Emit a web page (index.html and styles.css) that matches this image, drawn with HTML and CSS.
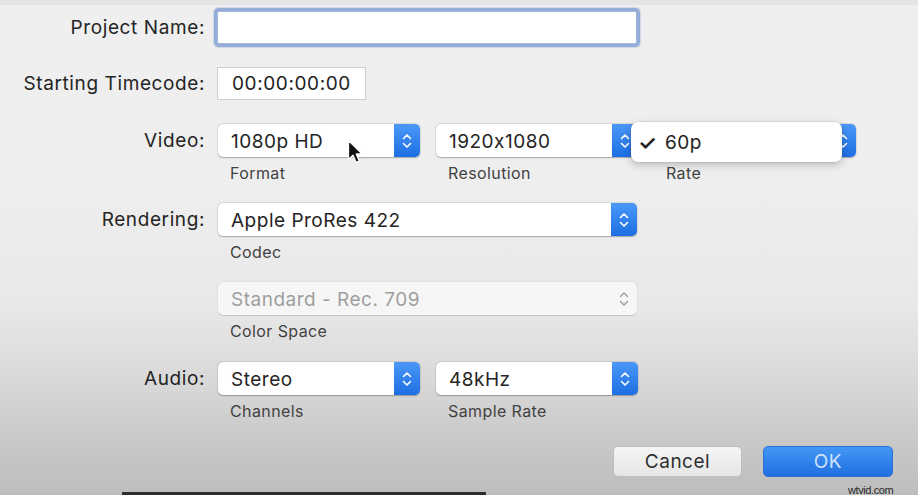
FILE: index.html
```html
<!DOCTYPE html>
<html>
<head>
<meta charset="utf-8">
<link rel="stylesheet" href="styles.css">
</head>
<body>
<div class="page">
  <div class="topline"></div>
  <div class="form">
    <div class="label">Project Name:</div>
    <div class="ctrl"><div class="textfield focused"></div></div>

    <div class="label">Starting Timecode:</div>
    <div class="ctrl"><div class="textfield timecode">00:00:00:00</div></div>

    <div class="label">Video:</div>
    <div class="ctrl triple">
      <div class="cell">
        <div class="popup"><span class="val">1080p HD</span><span class="stepper"><svg width="10" height="16" viewBox="0 0 10 16"><path d="M1.5 5.5 L5 2 L8.5 5.5 M1.5 10.5 L5 14 L8.5 10.5" fill="none" stroke="#fff" stroke-width="1.6" stroke-linecap="round" stroke-linejoin="round"/></svg></span></div>
        <div class="sub">Format</div>
      </div>
      <div class="cell">
        <div class="popup"><span class="val">1920x1080</span><span class="stepper"><svg width="10" height="16" viewBox="0 0 10 16"><path d="M1.5 5.5 L5 2 L8.5 5.5 M1.5 10.5 L5 14 L8.5 10.5" fill="none" stroke="#fff" stroke-width="1.6" stroke-linecap="round" stroke-linejoin="round"/></svg></span></div>
        <div class="sub">Resolution</div>
      </div>
      <div class="cell rate">
        <div class="popup"><span class="val"></span><span class="stepper"><svg width="10" height="16" viewBox="0 0 10 16"><path d="M1.5 5.5 L5 2 L8.5 5.5 M1.5 10.5 L5 14 L8.5 10.5" fill="none" stroke="#fff" stroke-width="1.6" stroke-linecap="round" stroke-linejoin="round"/></svg></span></div>
        <div class="sub">Rate</div>
        <div class="menu"><span class="check">✓</span><span class="item">60p</span></div>
      </div>
      <svg class="cursor" width="17" height="26" viewBox="0 0 17 26"><path d="M1.5 1.5 L1.5 20.5 L6 16.2 L9.2 23.4 L12.3 22 L9.2 15 L15.2 15 Z" fill="#111" stroke="#fff" stroke-width="1.3" stroke-linejoin="round"/></svg>
    </div>

    <div class="label">Rendering:</div>
    <div class="ctrl">
      <div class="popup wide"><span class="val">Apple ProRes 422</span><span class="stepper"><svg width="10" height="16" viewBox="0 0 10 16"><path d="M1.5 5.5 L5 2 L8.5 5.5 M1.5 10.5 L5 14 L8.5 10.5" fill="none" stroke="#fff" stroke-width="1.6" stroke-linecap="round" stroke-linejoin="round"/></svg></span></div>
      <div class="sub">Codec</div>
    </div>

    <div class="label"></div>
    <div class="ctrl">
      <div class="popup wide disabled"><span class="val">Standard - Rec. 709</span><span class="stepper"><svg width="10" height="16" viewBox="0 0 10 16"><path d="M1.5 5.5 L5 2 L8.5 5.5 M1.5 10.5 L5 14 L8.5 10.5" fill="none" stroke="#9a9a9a" stroke-width="1.4" stroke-linecap="round" stroke-linejoin="round"/></svg></span></div>
      <div class="sub">Color Space</div>
    </div>

    <div class="label">Audio:</div>
    <div class="ctrl triple">
      <div class="cell">
        <div class="popup"><span class="val">Stereo</span><span class="stepper"><svg width="10" height="16" viewBox="0 0 10 16"><path d="M1.5 5.5 L5 2 L8.5 5.5 M1.5 10.5 L5 14 L8.5 10.5" fill="none" stroke="#fff" stroke-width="1.6" stroke-linecap="round" stroke-linejoin="round"/></svg></span></div>
        <div class="sub">Channels</div>
      </div>
      <div class="cell">
        <div class="popup"><span class="val">48kHz</span><span class="stepper"><svg width="10" height="16" viewBox="0 0 10 16"><path d="M1.5 5.5 L5 2 L8.5 5.5 M1.5 10.5 L5 14 L8.5 10.5" fill="none" stroke="#fff" stroke-width="1.6" stroke-linecap="round" stroke-linejoin="round"/></svg></span></div>
        <div class="sub">Sample Rate</div>
      </div>
    </div>
  </div>

  <div class="buttons">
    <div class="btn cancel">Cancel</div>
    <div class="btn ok">OK</div>
  </div>

  <div class="watermark">wtvid.com</div>
  <div class="progress"></div>
</div>
</body>
</html>
```

FILE: styles.css
```css
* { box-sizing: border-box; }
html, body { margin: 0; padding: 0; }
body {
  width: 918px;
  height: 495px;
  overflow: hidden;
  font-family: Inter, "Liberation Sans", sans-serif;
  font-feature-settings: "calt" 0;
  color: #262626;
}
.page {
  position: relative;
  width: 918px;
  height: 495px;
  background: linear-gradient(to bottom, #efefef 0px, #eeeeee 180px, #e9e9e9 300px, #d9d9d9 380px, #c9c9c9 440px, #bdbdbd 495px);
  padding-top: 11px;
}
.topline {
  position: absolute;
  left: 0; top: 0;
  width: 918px;
  height: 5px;
  background: #e4e4e4;
}
.form {
  display: grid;
  grid-template-columns: 205px 701px;
  column-gap: 12px;
  align-items: start;
}
.label {
  text-align: right;
  font-size: 19px;
  letter-spacing: 0.6px;
  height: 33px;
  line-height: 34px;
  color: #242424;
}
.ctrl { position: relative; }
.form > :nth-child(1), .form > :nth-child(2) { margin-bottom: 23px; }
.form > :nth-child(3), .form > :nth-child(4) { margin-bottom: 24px; }
.form > :nth-child(5), .form > :nth-child(6) { margin-bottom: 20px; }
.form > :nth-child(7), .form > :nth-child(8) { margin-bottom: 20px; }
.form > :nth-child(9), .form > :nth-child(10) { margin-bottom: 21px; }
.form > :nth-child(11), .form > :nth-child(12) { margin-bottom: 25px; }
.textfield {
  height: 33px;
  background: #fff;
  border: 1px solid #cfcfcf;
  font-size: 19px;
  line-height: 32px;
}
.textfield.focused {
  width: 420px;
  border: 1px solid #a3b7dc;
  box-shadow: 0 0 0 3px #93acd8, 0 0 1px 4px rgba(147,172,216,0.35);
  border-radius: 2px;
}
.textfield.timecode {
  width: 149px;
  padding-left: 14px;
  letter-spacing: 0.6px;
  color: #222;
}
.triple {
  display: flex;
  gap: 16px;
}
.cell { position: relative; width: 202px; }
.popup {
  position: relative;
  display: flex;
  align-items: center;
  justify-content: space-between;
  width: 202px;
  height: 33px;
  margin-left: 1px;
  background: #fff;
  border-radius: 5px;
  box-shadow: 0 0.5px 1.5px rgba(0,0,0,0.28), 0 0 0 0.5px rgba(0,0,0,0.08);
  overflow: hidden;
}
.popup.wide { width: 419px; }
.val {
  padding-left: 13px;
  padding-top: 1px;
  font-size: 19px;
  letter-spacing: 0.5px;
  color: #242424;
  white-space: nowrap;
}
.stepper {
  width: 26px;
  height: 33px;
  display: flex;
  align-items: center;
  justify-content: center;
  background: linear-gradient(to bottom, #4b98f8, #1d6ee3);
}
.popup.disabled {
  background: #f6f6f6;
  box-shadow: 0 0.5px 1px rgba(0,0,0,0.12), 0 0 0 0.5px rgba(0,0,0,0.05);
}
.popup.disabled .val { color: #9e9e9e; }
.popup.disabled .stepper { background: transparent; }
.sub {
  font-size: 16px;
  letter-spacing: 0.4px;
  height: 20px;
  line-height: 20px;
  margin-top: 6px;
  padding-left: 13px;
  color: #424242;
}
.menu {
  position: absolute;
  left: -22px;
  top: -2px;
  width: 211px;
  height: 40px;
  background: #fff;
  border-radius: 7px;
  box-shadow: 0 3px 9px rgba(0,0,0,0.22), 0 0 0 0.5px rgba(0,0,0,0.1);
  display: flex;
  align-items: center;
  font-size: 19px;
  letter-spacing: 0.5px;
  color: #222;
}
.menu .check { width: 34px; padding-left: 7px; font-size: 21px; font-weight: 600; }
.menu .item { padding-left: 0; }
.cursor {
  position: absolute;
  left: 130px;
  top: 15px;
}
.buttons {
  display: flex;
  justify-content: flex-end;
  gap: 21px;
  padding-right: 25px;
}
.btn {
  width: 129px;
  height: 31px;
  border-radius: 5px;
  display: flex;
  align-items: center;
  justify-content: center;
  font-size: 19px;
  letter-spacing: 0.5px;
}
.btn.cancel {
  background: linear-gradient(to bottom, #f4f4f4, #e6e6e6);
  border: 1px solid #bdbdbd;
  color: #2f2f2f;
}
.btn.ok {
  width: 130px;
  background: linear-gradient(to bottom, #4597f5, #1f6fe0);
  border: 1px solid #2a72d8;
  color: #cfe1fb;
}
.watermark {
  position: absolute;
  left: 848px;
  top: 484px;
  font-family: "Liberation Sans", sans-serif;
  font-size: 11px;
  letter-spacing: -0.4px;
  color: #2a2a2a;
}
.progress {
  position: absolute;
  left: 122px;
  top: 492px;
  width: 364px;
  height: 3px;
  background: #2e2e2e;
}
```
